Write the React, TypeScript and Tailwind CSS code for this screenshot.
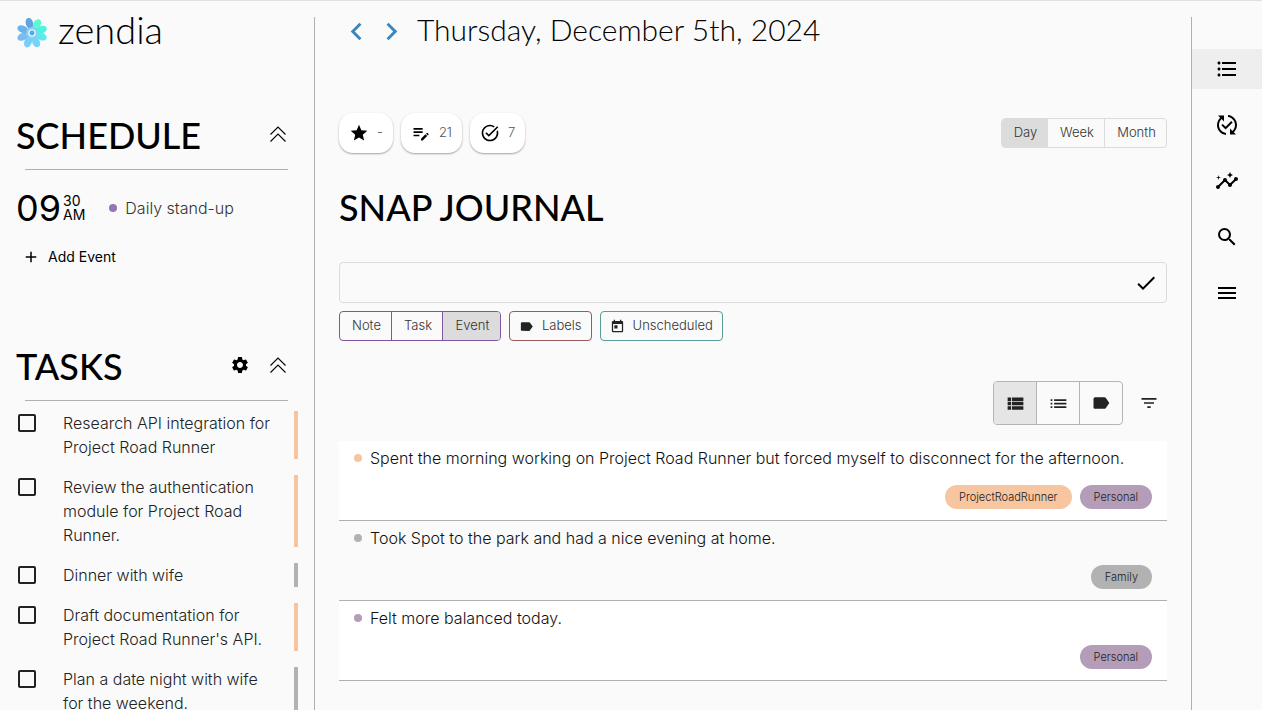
import type { ReactNode } from 'react';
import {
  MdAdd,
  MdCheck,
  MdEditNote,
  MdFilterList,
  MdFormatListBulleted,
  MdInsights,
  MdLabel,
  MdList,
  MdMenu,
  MdNavigateBefore,
  MdNavigateNext,
  MdPublishedWithChanges,
  MdSearch,
  MdSettings,
  MdStar,
  MdTaskAlt,
  MdToday,
  MdViewList,
} from 'react-icons/md';

const tasks = [
  { text: 'Research API integration for Project Road Runner', bar: 'bg-[#f7c6a1]' },
  { text: 'Review the authentication module for Project Road Runner.', bar: 'bg-[#f7c6a1]' },
  { text: 'Dinner with wife', bar: 'bg-[#b2b2b2]' },
  { text: "Draft documentation for Project Road Runner's API.", bar: 'bg-[#f7c6a1]' },
  { text: 'Plan a date night with wife for the weekend.', bar: 'bg-[#b2b2b2]' },
];

const entries = [
  {
    text: 'Spent the morning working on Project Road Runner but forced myself to disconnect for the afternoon.',
    dot: 'bg-[#f7c6a1]',
    bg: 'bg-white',
    labels: [
      { name: 'ProjectRoadRunner', color: 'bg-[#f7c6a1]' },
      { name: 'Personal', color: 'bg-[#b39db8]' },
    ],
  },
  {
    text: 'Took Spot to the park and had a nice evening at home.',
    dot: 'bg-[#b2b2b2]',
    bg: 'bg-[#fafafa]',
    labels: [{ name: 'Family', color: 'bg-[#b2b2b2]' }],
  },
  {
    text: 'Felt more balanced today.',
    dot: 'bg-[#b39db8]',
    bg: 'bg-white',
    labels: [{ name: 'Personal', color: 'bg-[#b39db8]' }],
  },
];

const petals = [
  { angle: -15, color: '#62a4e2' },
  { angle: 30, color: '#5cf8cf' },
  { angle: 71, color: '#4cf3e2' },
  { angle: 111, color: '#5fe8f0' },
  { angle: 156, color: '#74d2fc' },
  { angle: 203, color: '#78cefb' },
  { angle: 248, color: '#78bdf2' },
  { angle: 292, color: '#6cb2ec' },
];

function Logo() {
  return (
    <svg viewBox="0 0 32 32" className="h-8 w-8" aria-hidden="true">
      {petals.map((p) => (
        <path
          key={p.angle}
          d="M16 14C12.500 10 11.500 6 13 2.800C14.200 -0.200 17.800 -0.200 19 2.800C20.500 6 19.500 10 16 14Z"
          fill={p.color}
          transform={`rotate(${p.angle} 16 16)`}
        />
      ))}
      <circle cx="16" cy="16" r="6" fill="#86d0f2" />
      <circle cx="16" cy="16" r="3.800" fill="#e2f6fd" />
      <circle cx="16" cy="16" r="2.400" fill="#4fa9e6" />
    </svg>
  );
}

function DoubleChevronUp() {
  return (
    <svg viewBox="0 0 16 16" className="h-4 w-4" fill="none" stroke="currentColor" strokeWidth="1.100" aria-hidden="true">
      <path d="M0.500 8.500L8 1L15.500 8.500M0.500 15.500L8 8L15.500 15.500" />
    </svg>
  );
}

function SectionTitle({ title, children }: { title: string; children?: ReactNode }) {
  return (
    <div className="flex h-12 items-center justify-between">
      <h2 className="font-[Lato,sans-serif] text-4xl font-medium text-black">{title}</h2>
      <div className="flex items-center gap-5 pr-0.5 pb-0.5">
        {children}
        <button aria-label={`Collapse ${title.toLowerCase()}`}>
          <DoubleChevronUp />
        </button>
      </div>
    </div>
  );
}

function Sidebar() {
  return (
    <aside className="flex w-[315px] shrink-0 flex-col border-r border-[#b0b0b0]">
      <a href="#" className="flex h-8 items-center gap-2.5 pl-4">
        <Logo />
        <span className="pb-2 font-[Lato,sans-serif] text-[38px] leading-8 font-light">zendia</span>
      </a>

      {/* Schedule */}
      <section className="mt-[62px] pr-[26px] pl-4">
        <SectionTitle title="SCHEDULE" />
        <hr className="mt-2.5 ml-[9px] border-[#b0b0b0]" />
        <div className="mt-5 flex h-9 items-center">
          <div className="flex items-center gap-0.5">
            <span className="text-4xl leading-9">09</span>
            <span className="flex flex-col text-sm leading-[14px]">
              <span>30</span>
              <span>AM</span>
            </span>
          </div>
          <span className="mr-2 ml-6 h-2 w-2 rounded-full bg-[#9575b5]" />
          <span className="text-base font-light text-[#333]">Daily stand-up</span>
        </div>
        <button className="mt-[19px] ml-1.5 flex h-6 items-center gap-2 text-sm">
          <MdAdd size={18} />
          Add Event
        </button>
      </section>

      {/* Tasks */}
      <section className="mt-[73px] pr-4 pl-4">
        <div className="pr-2.5">
          <SectionTitle title="TASKS">
            <button aria-label="Task settings">
              <MdSettings size={20} />
            </button>
          </SectionTitle>
          <hr className="mt-2.5 ml-[9px] border-[#b0b0b0]" />
        </div>
        <ul className="mt-2.5 flex flex-col gap-4">
          {tasks.map((task) => (
            <li key={task.text} className="flex">
              <label className="flex flex-1 items-start">
                <input
                  type="checkbox"
                  className="mt-[3px] mr-[27px] ml-0.5 h-[18px] w-[18px] shrink-0 appearance-none rounded-xs border-2 border-[#222]"
                />
                <span className="flex-1 pr-3 text-base leading-6 font-light text-[#222]">{task.text}</span>
              </label>
              <span className={`w-1 ${task.bar}`} />
            </li>
          ))}
        </ul>
      </section>
    </aside>
  );
}

function Stat({ icon, value }: { icon: ReactNode; value: string }) {
  return (
    <div className="flex h-10 items-center gap-2 rounded-[14px] bg-white px-2.5 text-[13px] font-light text-[#555] shadow-[0_1px_2px_rgba(0,0,0,0.35)]">
      <span className="text-black">{icon}</span>
      {value}
    </div>
  );
}

function Composer() {
  return (
    <form className="mt-[31px]">
      <div className="flex h-[41px] items-center rounded border border-[#dcdcdc] pr-2">
        <input type="text" aria-label="New journal entry" className="h-full min-w-0 flex-1 px-3 outline-none" />
        <button type="button" aria-label="Save entry">
          <MdCheck size={24} />
        </button>
      </div>
      <div className="mt-2 flex gap-2 text-[13px] font-light text-[#333]">
        <div className="flex h-[30px] divide-x divide-[#7e57a0] overflow-hidden rounded border border-[#7e57a0]">
          <button type="button" className="w-[52px] pl-0.5">Note</button>
          <button type="button" className="w-[51px] pl-0.5">Task</button>
          <button type="button" aria-pressed="true" className="w-[57px] bg-[#dcdcdc] pl-0.5">Event</button>
        </div>
        <button type="button" className="flex h-[30px] items-center gap-2 rounded border border-[#9c5a5f] px-[9px]">
          <MdLabel size={15} className="text-[#222]" />
          Labels
        </button>
        <button type="button" className="flex h-[30px] items-center gap-2 rounded border border-[#5a9c98] px-[9px]">
          <MdToday size={15} className="text-[#222]" />
          Unscheduled
        </button>
      </div>
    </form>
  );
}

function Journal() {
  return (
    <main className="min-w-0 flex-1 px-6">
      <div className="flex h-7 items-center">
        <button aria-label="Previous day" className="text-[#3a87bd]">
          <MdNavigateBefore size={35} />
        </button>
        <button aria-label="Next day" className="text-[#3a87bd]">
          <MdNavigateNext size={35} />
        </button>
        <h1 className="ml-2 pb-1 font-[Lato,sans-serif] text-3xl font-light">Thursday, December 5th, 2024</h1>
      </div>

      <div className="mt-[68px] flex items-center justify-between">
        <div className="flex gap-2">
          <Stat icon={<MdStar size={20} />} value="-" />
          <Stat icon={<MdEditNote size={20} />} value="21" />
          <Stat icon={<MdTaskAlt size={20} />} value="7" />
        </div>
        <div className="flex h-[30px] divide-x divide-[#dcdcdc] overflow-hidden rounded border border-[#dcdcdc] text-[13px] font-light text-[#333]">
          <button aria-pressed="true" className="w-[46px] bg-[#dcdcdc] pl-0.5">Day</button>
          <button className="w-[57px] pl-0.5">Week</button>
          <button className="w-[61px] pl-0.5">Month</button>
        </div>
      </div>

      <h2 className="mt-[30px] flex h-12 items-center font-[Lato,sans-serif] text-4xl font-medium text-black">SNAP JOURNAL</h2>

      <Composer />

      {/* View switcher */}
      <div className="mt-10 flex items-center justify-end gap-4 pr-2 text-[#222]">
        <div className="flex h-11 divide-x divide-[#b5b5b5] overflow-hidden rounded border border-[#b5b5b5]">
          <button aria-label="Detailed list" aria-pressed="true" className="flex w-[43px] items-center justify-center bg-[#e5e5e5]">
            <MdViewList size={21} />
          </button>
          <button aria-label="Compact list" className="flex w-[43px] items-center justify-center">
            <MdList size={21} />
          </button>
          <button aria-label="Group by label" className="flex w-[42px] items-center justify-center">
            <MdLabel size={20} />
          </button>
        </div>
        <button aria-label="Filter">
          <MdFilterList size={20} />
        </button>
      </div>

      <ul className="mt-4">
        {entries.map((entry) => (
          <li key={entry.text} className={`h-20 border-b border-[#b0b0b0] px-[15px] pt-[5px] ${entry.bg}`}>
            <div className="flex items-center gap-2">
              <span className={`h-2 w-2 shrink-0 rounded-full ${entry.dot}`} />
              <p className="text-base leading-6 font-light text-[#111]">{entry.text}</p>
            </div>
            <div className="mt-[15px] flex justify-end gap-2">
              {entry.labels.map((label) => (
                <span key={label.name} className={`flex h-6 items-center rounded-full px-3.5 text-[11px] font-light text-[#222] ${label.color}`}>
                  {label.name}
                </span>
              ))}
            </div>
          </li>
        ))}
      </ul>
    </main>
  );
}

function NavRail() {
  const items = [
    { label: 'Journal', icon: <MdFormatListBulleted size={24} />, active: true },
    { label: 'Habits', icon: <MdPublishedWithChanges size={24} /> },
    { label: 'Insights', icon: <MdInsights size={24} /> },
    { label: 'Search', icon: <MdSearch size={24} /> },
    { label: 'Menu', icon: <MdMenu size={24} /> },
  ];

  return (
    <nav className="flex w-[71px] shrink-0 flex-col gap-4 border-l border-[#b0b0b0] pt-8">
      {items.map((item) => (
        <button
          key={item.label}
          aria-label={item.label}
          className={`flex h-10 items-center justify-center ${item.active ? 'bg-[#eeeeee]' : ''}`}
        >
          {item.icon}
        </button>
      ))}
    </nav>
  );
}

export default function App() {
  return (
    <div className="flex h-screen overflow-hidden border-t border-[#e0e0e0] bg-[#fafafa] pt-4 font-[Inter,sans-serif] text-black">
      <Sidebar />
      <Journal />
      <NavRail />
    </div>
  );
}
